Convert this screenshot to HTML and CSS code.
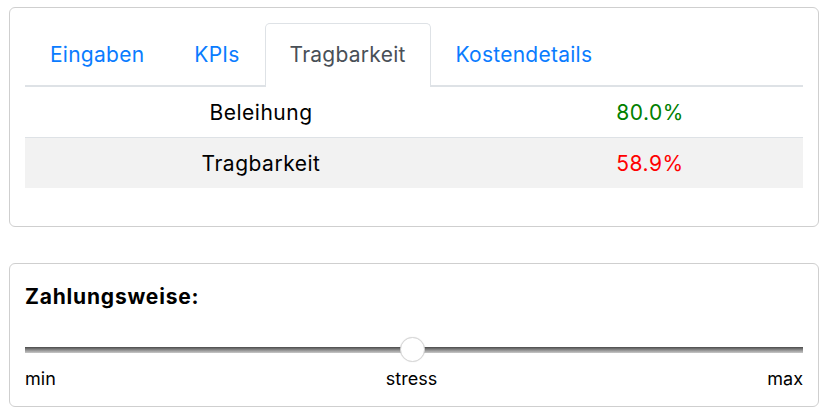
FILE: index.html
```html
<!DOCTYPE html>
<html lang="de">
<head>
  <meta charset="UTF-8">
  <meta name="viewport" content="width=device-width, initial-scale=1.0">
  <title>Tragbarkeit</title>
  <link rel="stylesheet" href="styles.css">
</head>
<body>
  <!-- Tabs + Ergebnis -->
  <div class="card">
    <ul class="tabs">
      <li><a href="#">Eingaben</a></li>
      <li><a href="#">KPIs</a></li>
      <li class="active"><a href="#">Tragbarkeit</a></li>
      <li><a href="#">Kostendetails</a></li>
    </ul>
    <table class="result">
      <tr>
        <td>Beleihung</td>
        <td class="good">80.0%</td>
      </tr>
      <tr class="striped">
        <td>Tragbarkeit</td>
        <td class="bad">58.9%</td>
      </tr>
    </table>
  </div>

  <!-- Zahlungsweise -->
  <div class="card slider-card">
    <h3>Zahlungsweise:</h3>
    <div class="slider">
      <div class="track"></div>
      <div class="thumb"></div>
    </div>
    <div class="labels">
      <span>min</span>
      <span>stress</span>
      <span>max</span>
    </div>
  </div>
</body>
</html>
```

FILE: styles.css
```css
/* General */
body {
  font-family: Inter, "Liberation Sans", Arial, sans-serif;
  margin: 0;
  padding: 7px 9px 0;
  background: white;
  color: #000;
}

.card {
  border: 1px solid #cfcfcf;
  border-radius: 6px;
  padding: 15px 15px 38px;
  margin-bottom: 36px;
}

/* Tabs */
.tabs {
  list-style-type: none;
  margin: 0;
  padding: 0;
  display: flex;
  border-bottom: 2px solid #dee2e6;
}

.tabs li {
  margin-bottom: -2px;
}

.tabs li a {
  display: block;
  height: 62px;
  line-height: 62px;
  padding: 0 24px;
  border: 1px solid transparent;
  border-bottom: 0;
  border-radius: 5px 5px 0 0;
  color: #0a7cff;
  text-decoration: none;
  font-size: 21px;
  letter-spacing: 0.25px;
  box-sizing: border-box;
}

.tabs li.active a {
  color: #495057;
  background: white;
  border-color: #dee2e6;
  height: 64px;
}

/* Table */
.result {
  width: 100%;
  border-collapse: collapse;
  font-size: 21px;
  letter-spacing: 0.5px;
}

.result td {
  height: 50px;
  padding: 0;
  text-align: center;
  border-top: 1px solid #dee2e6;
}

.result tr:first-child td {
  border-top: 0;
}

.result td:first-child {
  width: 472px;
}

.striped td {
  background: #f2f2f2;
}

.good {
  color: #008000;
}

.bad {
  color: #ff0000;
}

/* Slider */
.slider-card {
  padding: 16px 15px 15px;
  margin-bottom: 0;
}

.slider-card h3 {
  margin: 2px 0 0;
  font-size: 21px;
  letter-spacing: 0.8px;
  font-weight: bold;
  line-height: 30px;
}

.slider {
  position: relative;
  height: 26px;
  margin-top: 25px;
  display: flex;
  align-items: center;
}

.track {
  width: 100%;
  height: 6px;
  background: linear-gradient(#4a4a4a, #9a9a9a 60%, #c8c8c8);
}

.thumb {
  position: absolute;
  left: 375px;
  top: 0;
  width: 23px;
  height: 23px;
  border-radius: 50%;
  background: white;
  border: 1px solid #d6d6d6;
  box-shadow: 0 0 1px rgba(0, 0, 0, 0.15);
}

.labels {
  display: flex;
  justify-content: space-between;
  margin-top: 4px;
  font-size: 18px;
  line-height: 24px;
}
```
